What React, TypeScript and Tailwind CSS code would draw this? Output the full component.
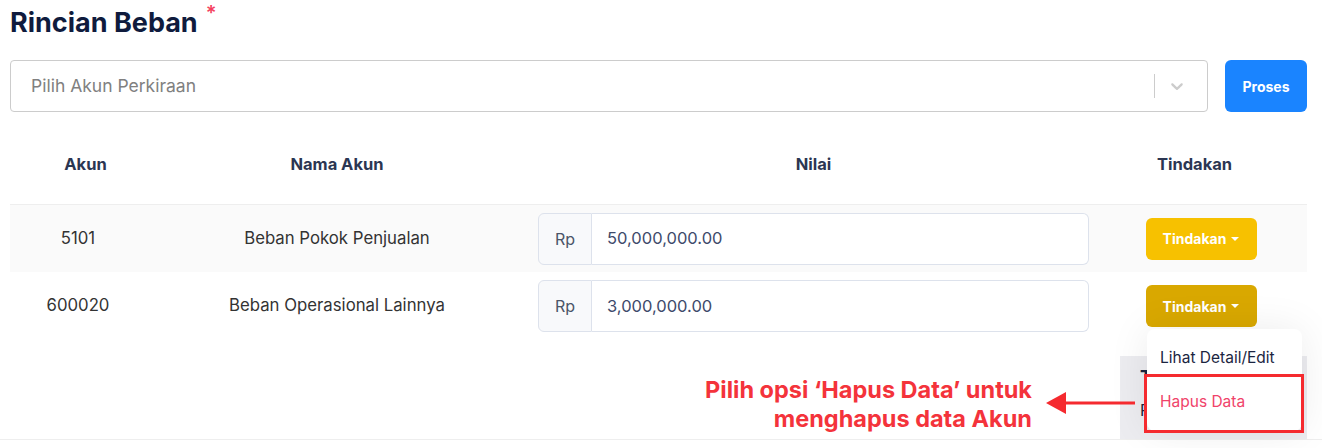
import React from 'react';

const rows = [
  { akun: '5101', nama: 'Beban Pokok Penjualan', nilai: '50,000,000.00', open: false },
  { akun: '600020', nama: 'Beban Operasional Lainnya', nilai: '3,000,000.00', open: true },
];

function Caret() {
  return (
    <span className="ml-[5px] inline-block h-0 w-0 border-x-[4px] border-t-[4px] border-x-transparent border-t-white align-middle" />
  );
}

export default function App() {
  return (
    <div className="relative h-[448px] w-[1322px] overflow-hidden bg-white font-['Inter',sans-serif]">
      <div className="border-b border-[#eeeeee] pb-0">
        <div className="pl-[10px] pr-[15px]">
          {/* Title */}
          <h1 className="flex items-start pt-[6px] text-[27px] font-bold leading-[34px] text-[#0f1b3d]">
            Rincian Beban
            <span className="ml-[8px] mt-[-3px] text-[20px] font-semibold leading-[20px] text-[#f43f5e]">*</span>
          </h1>

          {/* Select + button */}
          <div className="mt-[20px] flex gap-[17px]">
            <div className="flex h-[52px] flex-1 items-center rounded-[4px] border border-[#cccccc] bg-white">
              <div className="flex-1 pl-[20px] text-[17.5px] text-[#808080]">Pilih Akun Perkiraan</div>
              <span className="h-[24px] w-px bg-[#cccccc]" />
              <div className="px-[12px] pr-[20px] text-[#cccccc]">
                <svg width="20" height="20" viewBox="0 0 20 20" fill="currentColor">
                  <path d="M4.516 7.548c0.436-0.446 1.043-0.481 1.576 0l3.908 3.747 3.908-3.747c0.533-0.481 1.141-0.446 1.574 0 0.436 0.445 0.408 1.197 0 1.615-0.406 0.418-4.695 4.502-4.695 4.502-0.217 0.223-0.502 0.335-0.787 0.335s-0.57-0.112-0.789-0.335c0 0-4.287-4.084-4.695-4.502s-0.436-1.17 0-1.615z" />
                </svg>
              </div>
            </div>
            <button className="h-[52px] w-[82px] rounded-[6px] bg-[#1a84ff] text-[14px] font-bold text-white">
              Proses
            </button>
          </div>

          {/* Table header */}
          <div className="flex pb-[30px] pt-[42px] text-[16.5px] font-bold leading-[20px] text-[#2b3652]">
            <div className="w-[136px] pl-[15px] text-center">Akun</div>
            <div className="w-[382px] text-center">Nama Akun</div>
            <div className="w-[571px] text-center">Nilai</div>
            <div className="flex-1 pr-[17px] text-center">Tindakan</div>
          </div>

          {/* Rows */}
          {rows.map((r, i) => (
            <div
              key={r.akun}
              className={`flex h-[68px] items-center text-[16.75px] text-[#333333] ${
                i === 0 ? 'border-t border-[#eeeeee] bg-[#fafafa]' : 'bg-white'
              }`}
            >
              <div className="w-[136px] text-center">{r.akun}</div>
              <div className="w-[382px] text-center">{r.nama}</div>
              <div className="flex w-[571px] px-[10px]">
                <div className="flex h-[52px] w-[54px] items-center justify-center rounded-l-[6px] border border-[#dde2ec] bg-[#f8f9fb] text-[16px] text-[#4b5568]">
                  Rp
                </div>
                <div className="flex h-[52px] flex-1 items-center rounded-r-[6px] border border-l-0 border-[#dde2ec] bg-white pl-[15px] text-[16.5px] text-[#3e4a6b]">
                  {r.nilai}
                </div>
              </div>
              <div className="flex flex-1 justify-center pr-[4px]">
                <button
                  className={`flex h-[42px] w-[111px] items-center justify-center rounded-[6px] text-[14px] font-bold text-white ${
                    r.open ? 'bg-[#d9a800]' : 'bg-[#f7c100]'
                  }`}
                >
                  Tindakan
                  <Caret />
                </button>
              </div>
            </div>
          ))}

          {/* Summary card (partly under the menu) */}
          <div className="mt-[16px] flex justify-end">
            <div className="h-[83px] w-[187px] bg-[#ececf0] pl-[20px] pt-[8px] text-[#1b2541]">
              <div className="text-[18px] font-bold leading-[26px]">Total</div>
              <div className="mt-[10px] text-[16px] leading-[20px]">Rp 53,000,000.00</div>
            </div>
          </div>
        </div>
      </div>

      {/* Dropdown menu */}
      <div className="absolute left-[1147px] top-[329px] w-[155px] rounded-[8px] bg-white pb-[7px] pt-[7px] shadow-[0_0_40px_rgba(0,0,0,0.08)]">
        <div className="flex h-[44px] items-center px-[13px] text-[15.5px] text-[#1b2541]">Lihat Detail/Edit</div>
        <div className="flex h-[44px] items-center px-[13px] text-[15.5px] text-[#f0436a]">Hapus Data</div>
      </div>

      {/* Annotation */}
      <div className="absolute left-[1144px] top-[374px] h-[59px] w-[160px] border-[3px] border-[#f52a2f]" />
      <svg className="absolute left-[1044px] top-[392px]" width="92" height="22" viewBox="0 0 92 22">
        <polygon points="2,11 22,0 22,22" fill="#f52a2f" />
        <line x1="20" y1="11" x2="91" y2="11" stroke="#f52a2f" strokeWidth="3" />
      </svg>
      <div className="absolute right-[290px] top-[375px] text-right text-[23.5px] font-bold leading-[29px] text-[#f4333b]">
        Pilih opsi ‘Hapus Data’ untuk
        <br />
        menghapus data Akun
      </div>
    </div>
  );
}
